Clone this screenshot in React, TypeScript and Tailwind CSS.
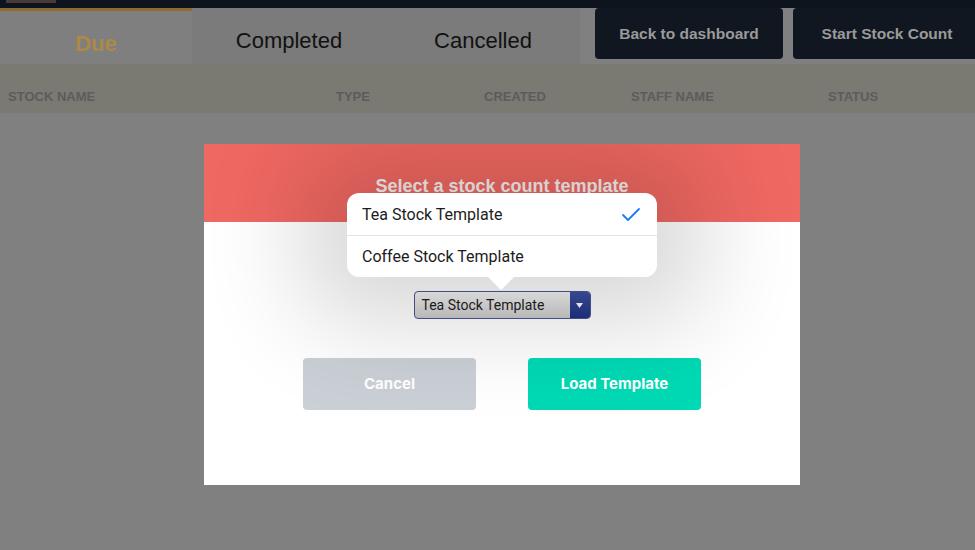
import { Check } from 'lucide-react';

const tabs = [
  { label: 'Due', active: true },
  { label: 'Completed', active: false },
  { label: 'Cancelled', active: false },
];

const columns = [
  { label: 'STOCK NAME', w: 'w-[328px]' },
  { label: 'TYPE', w: 'w-[148px]' },
  { label: 'CREATED', w: 'w-[147px]' },
  { label: 'STAFF NAME', w: 'w-[197px]' },
  { label: 'STATUS', w: 'w-[140px]' },
];

const App = () => {
  return (
    <div className="relative w-[975px] h-[550px] overflow-hidden bg-[#808080] font-['Liberation_Sans',Arial,sans-serif]">
      {/* top strip */}
      <div className="h-[8px] bg-[#0e141d] flex">
        <div className="ml-[6px] w-[50px] h-[3px] bg-[#4a3a36]" />
      </div>

      {/* tabs + actions */}
      <div className="flex h-[56px]">
        <div className="flex w-[580px] bg-[#7b7b7b]">
          {tabs.map((t) => (
            <div
              key={t.label}
              className={
                t.active
                  ? 'w-[192px] bg-[#7f7f7f] border-t-[3px] border-[#8c6c30] flex items-center justify-center pt-[11px]'
                  : 'w-[194px] flex items-center justify-center pt-[9px]'
              }
            >
              <span
                className={
                  t.active
                    ? 'text-[22px] font-bold text-[#ad8946]'
                    : 'text-[22px] text-[#111111]'
                }
              >
                {t.label}
              </span>
            </div>
          ))}
        </div>
        <div className="flex gap-[10px] pl-[15px] pb-[5px]">
          <button className="w-[188px] h-[51px] rounded-[4px] bg-[#111720] text-[#9a9a9a] text-[15.5px] font-bold">
            Back to dashboard
          </button>
          <button className="w-[188px] h-[51px] rounded-[4px] bg-[#111720] text-[#9a9a9a] text-[15.5px] font-bold">
            Start Stock Count
          </button>
        </div>
      </div>

      {/* table header */}
      <div className="flex items-start h-[49px] bg-[#7a7972] pl-[8px] pt-[23px] text-[13px] font-bold text-[#5c5c5c]">
        {columns.map((c) => (
          <div key={c.label} className={c.w}>
            {c.label}
          </div>
        ))}
      </div>

      {/* modal */}
      <div className="absolute left-[204px] top-[144px] w-[596px] h-[341px] bg-white overflow-hidden flex flex-col">
        <div className="h-[78px] bg-[#f06862] flex justify-center pt-[29px]">
          <span className="text-[18px] font-bold text-[#f6f0f0]">Select a stock count template</span>
        </div>
        <div className="relative flex-1 flex flex-col items-center pt-[69px]">
          {/* select */}
          <div className="relative z-10 flex w-[177px] h-[28px] rounded-[4px] border border-[#4b5691] bg-gradient-to-b from-[#f5f5f5] to-[#c9c9c9] overflow-hidden">
            <span className="flex-1 pl-[7px] leading-[26px] text-[14px] text-[#1e1e1e] font-['Roboto',sans-serif]">
              Tea Stock Template
            </span>
            <span className="w-[20px] bg-gradient-to-b from-[#3d52a0] to-[#1f3182] flex items-center justify-center">
              <svg width="7" height="5" viewBox="0 0 7 5">
                <path d="M0 0h7L3.5 5z" fill="#fff" />
              </svg>
            </span>
          </div>

          <div className="flex gap-[52px] mt-[39px]">
            <button className="w-[173px] h-[52px] rounded-[4px] bg-[#cbd0d7] text-white text-[15px] font-bold font-['Inter',sans-serif]">
              Cancel
            </button>
            <button className="w-[173px] h-[52px] rounded-[4px] bg-[#00d9b5] text-white text-[15px] font-bold font-['Inter',sans-serif]">
              Load Template
            </button>
          </div>
        </div>

        {/* dropdown popover */}
        <div className="absolute left-[143px] top-[49px] w-[310px] z-20">
          <div className="relative bg-white rounded-[12px] shadow-[0_0_100px_45px_rgba(0,0,0,0.16)] font-['Roboto',sans-serif] text-[16px] text-[#1c1c1c]">
            <div className="flex items-center justify-between h-[43px] pl-[15px] pr-[14px] pt-[1px] border-b border-[#e4e4e4]">
              <span>Tea Stock Template</span>
              <Check className="w-[24px] h-[24px] text-[#1a7cf5]" strokeWidth={1.8} />
            </div>
            <div className="flex items-center h-[41px] pl-[15px] pt-[1px]">
              <span>Coffee Stock Template</span>
            </div>
            <div className="absolute left-[141px] -bottom-[13px] w-0 h-0 border-l-[13px] border-r-[13px] border-t-[13px] border-l-transparent border-r-transparent border-t-white" />
          </div>
        </div>
      </div>
    </div>
  );
};

export default App;
